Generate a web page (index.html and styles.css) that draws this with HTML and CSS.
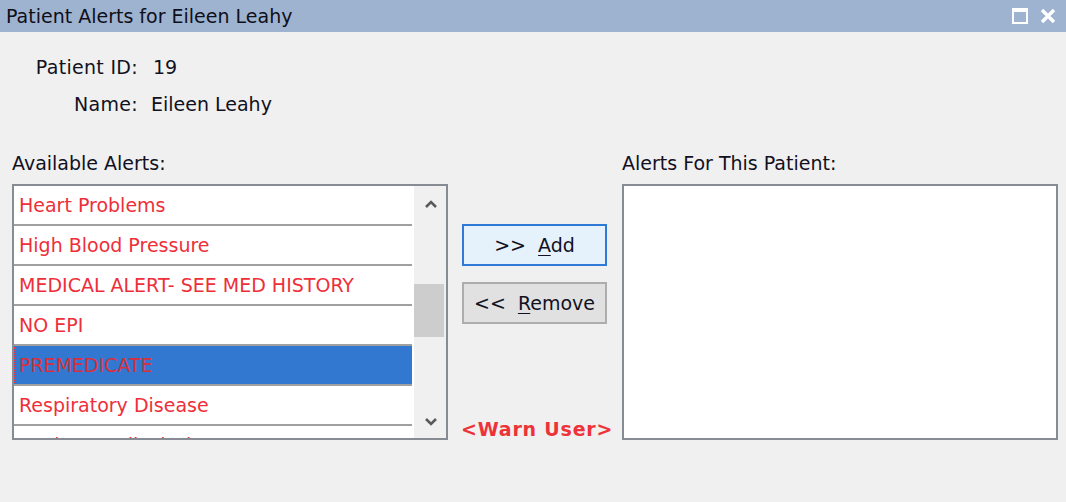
FILE: index.html
```html
<!DOCTYPE html>
<html>
<head>
<meta charset="utf-8">
<link rel="stylesheet" href="styles.css">
</head>
<body>
<div class="titlebar">
  <span class="title">Patient Alerts for Eileen Leahy</span>
  <div class="winctl">
    <svg width="16" height="16" viewBox="0 0 16 16"><path d="M1 1.5h14M1 1v14h14V1" fill="none" stroke="#fff" stroke-width="2"/><rect x="0" y="0" width="16" height="4" fill="#fff"/></svg>
    <svg width="16" height="16" viewBox="0 0 16 16"><path d="M2 2L14 14M14 2L2 14" stroke="#fff" stroke-width="3.4"/></svg>
  </div>
</div>
<div class="content">
  <div class="info">
    <span class="lbl">Patient ID:</span><span class="val">19</span>
    <span class="lbl">Name:</span><span class="val val-name">Eileen Leahy</span>
  </div>
  <div class="panes">
    <div class="plabel">Available Alerts:</div>
    <div></div>
    <div class="plabel">Alerts For This Patient:</div>
    <div class="listbox">
      <div class="rows">
        <div class="row">Heart Problems</div>
        <div class="row">High Blood Pressure</div>
        <div class="row">MEDICAL ALERT- SEE MED HISTORY</div>
        <div class="row">NO EPI</div>
        <div class="row selected"><span class="focus">PREMEDICATE</span></div>
        <div class="row">Respiratory Disease</div>
        <div class="row">Review Medical History</div>
      </div>
      <div class="scrollbar">
        <svg class="arrow" width="12" height="8" viewBox="0 0 12 8"><path d="M1 7L6 2L11 7" fill="none" stroke="#5a5a5a" stroke-width="2.6"/></svg>
        <div class="track"><div class="thumb"></div></div>
        <svg class="arrow" width="12" height="8" viewBox="0 0 12 8"><path d="M1 1L6 6L11 1" fill="none" stroke="#5a5a5a" stroke-width="2.6"/></svg>
      </div>
    </div>
    <div class="middle">
      <button class="btn btn-add">&gt;&gt;&nbsp; <u>A</u>dd</button>
      <button class="btn btn-remove">&lt;&lt;&nbsp; <u>R</u>emove</button>
      <div class="warn">&lt;Warn User&gt;</div>
    </div>
    <div class="listbox empty"></div>
  </div>
</div>
</body>
</html>
```
FILE: styles.css
```css
html, body {
  margin: 0;
  padding: 0;
}
body {
  background: #f0f0f0;
  font-family: "DejaVu Sans", sans-serif;
  font-size: 19px;
  color: #111122;
  width: 1066px;
  height: 502px;
  overflow: hidden;
}
.titlebar {
  height: 32px;
  background: #9eb3cf;
  display: flex;
  align-items: center;
  justify-content: space-between;
  padding: 0 10px 0 6px;
}
.title {
  color: #0f0f1a;
  line-height: 32px;
}
.winctl {
  display: flex;
  gap: 12px;
  align-items: center;
}
.winctl svg {
  display: block;
}
.content {
  padding: 0 8px 0 12px;
}
.info {
  display: grid;
  grid-template-columns: 126px auto;
  grid-auto-rows: 37px;
  column-gap: 15px;
  margin-top: 16px;
  align-items: center;
}
.lbl {
  text-align: right;
  letter-spacing: 0.3px;
}
.val-name {
  margin-left: -2px;
}
.panes {
  display: grid;
  grid-template-columns: 436px 174px 436px;
  grid-template-rows: 24px 256px;
  row-gap: 9px;
  margin-top: 29px;
}
.plabel {
  line-height: 24px;
}
.listbox {
  background: #fff;
  border: 2px solid #878b93;
  box-sizing: border-box;
  display: flex;
  overflow: hidden;
}
.rows {
  width: 398px;
  display: flex;
  flex-direction: column;
  overflow: hidden;
}
.row {
  flex: 0 0 38px;
  border-bottom: 2px solid #a0a0a0;
  color: #ee2f3a;
  line-height: 38px;
  padding-left: 5px;
  white-space: nowrap;
}
.row.selected {
  background: #3277d0;
  padding: 1px 0 1px 0;
  box-sizing: border-box;
  flex-basis: 40px;
  display: flex;
}
.focus {
  flex: 1;
  border: 1px dotted #ff3030;
  line-height: 34px;
  padding-left: 4px;
  color: #d8303a;
}
.scrollbar {
  width: 32px;
  margin-left: 2px;
  background: #f0f0f0;
  display: flex;
  flex-direction: column;
  align-items: center;
}
.arrow {
  display: block;
  margin: 14px 0 0 2px;
}
.arrow:last-child {
  margin: 0 0 12px 2px;
}
.track {
  flex: 1;
  width: 100%;
}
.thumb {
  margin-top: 76px;
  height: 53px;
  width: 30px;
  background: #cdcdcd;
}
.middle {
  display: flex;
  flex-direction: column;
  padding: 40px 0 0 14px;
}
.btn {
  width: 145px;
  height: 42px;
  box-sizing: border-box;
  font-family: "DejaVu Sans", sans-serif;
  font-size: 19px;
  color: #111122;
  padding: 0;
}
.btn u {
  text-underline-offset: 3px;
}
.btn-add {
  background: #e5f1fb;
  border: 2px solid #2f7ad6;
}
.btn-remove {
  background: #e1e1e1;
  border: 2px solid #adadad;
  margin-top: 16px;
}
.warn {
  margin-top: auto;
  color: #ee3338;
  font-weight: bold;
  line-height: 22px;
  letter-spacing: 0.8px;
  margin-left: -1px;
}
.listbox.empty {
  display: block;
}
```
